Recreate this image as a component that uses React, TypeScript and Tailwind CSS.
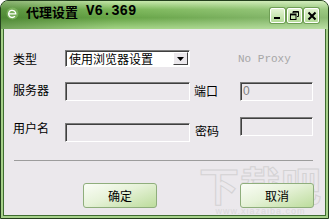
import React from "react";

const sunken =
  "border border-t-[#7b7b7b] border-l-[#7b7b7b] border-b-white border-r-white shadow-[inset_1px_1px_0_#3f3f3f]";

function TitleButton({ children }: { children: React.ReactNode }) {
  return (
    <div className="flex h-[15px] w-[15px] items-center justify-center rounded-[2px] border border-white bg-[linear-gradient(to_bottom,#e4f4d4,#b4dc98)] shadow-[0_0_0_1px_#6f9e55]">
      {children}
    </div>
  );
}

function Field({ w, value }: { w: string; value?: string }) {
  return (
    <div className={`${w} h-[19px] ${sunken} bg-[#ebe8ec] pl-[2px] text-[12px] leading-[16px] text-[#808080] font-['Liberation_Sans',sans-serif]`}>
      {value}
    </div>
  );
}

function Button({ label }: { label: string }) {
  return (
    <button
      type="button"
      className="flex h-[25px] w-[74px] items-center justify-center rounded-[3px] border border-[#8fae7c] bg-[linear-gradient(160deg,#fafdf6_0%,#e6f2d8_45%,#bcdc9c_100%)] text-[12px] text-black"
    >
      {label}
    </button>
  );
}

export default function App() {
  return (
    <div className="h-[219px] w-[329px] overflow-hidden bg-white font-['Noto_Sans_CJK_SC',sans-serif]">
      <div className="relative flex h-full w-full flex-col rounded-t-[8px] border border-[#233f1d] bg-[#a6d08a]">
        {/* title bar */}
        <div className="flex h-[28px] shrink-0 items-start rounded-t-[7px] bg-[linear-gradient(to_right,rgba(30,80,15,0.35),rgba(30,80,15,0)_35%,rgba(255,255,255,0.25)),linear-gradient(to_bottom,#c6e8aa_0%,#7cb85a_30%,#66a446_60%,#a4d486_100%)] pl-[5px] pr-[9px]">
          <svg width="13" height="13" viewBox="0 0 13 13" className="mt-[6px]">
            <circle cx="6.5" cy="6.5" r="6" fill="#8cc26c" opacity="0.6" />
            <path d="M3 6.8 H9.8 A3.6 3.6 0 1 0 8.6 9.6" stroke="white" strokeWidth="1.3" fill="none" strokeLinecap="round" />
          </svg>
          <span className="ml-[7px] mt-[3px] text-[13px] font-bold leading-[15px] text-black">代理设置</span>
          <span className="ml-[8px] mt-[3px] font-['Liberation_Mono',monospace] text-[14px] font-bold leading-[15px] text-black">V6.369</span>
          <div className="ml-auto mt-[7px] flex gap-[2px]">
            <TitleButton>
              <svg width="9" height="9" viewBox="0 0 9 9">
                <rect x="1" y="6" width="6" height="2" fill="black" />
              </svg>
            </TitleButton>
            <TitleButton>
              <svg width="9" height="9" viewBox="0 0 9 9">
                <path d="M3 0.5 H8.5 V5.5 H7 M3 0.5 V2" stroke="black" strokeWidth="1" fill="none" />
                <rect x="0.5" y="3" width="5.5" height="5.5" stroke="black" strokeWidth="1" fill="none" />
                <rect x="0.5" y="3" width="5.5" height="1.4" fill="black" />
                <rect x="3" y="0.5" width="5.5" height="1.2" fill="black" />
              </svg>
            </TitleButton>
            <TitleButton>
              <svg width="10" height="10" viewBox="0 0 10 10">
                <path d="M1.5 1.5 L8.5 8.5 M8.5 1.5 L1.5 8.5" stroke="black" strokeWidth="2" />
              </svg>
            </TitleButton>
          </div>
        </div>

        {/* body */}
        <div className="mx-[2px] mb-[2px] flex flex-1 flex-col border-x border-b border-[#3e6c30] bg-[#ebe8ec] pl-[9px] text-[12px] leading-[14px] text-black">
          {/* row 1 */}
          <div className="mt-[21px] flex h-[17px] items-center">
            <span className="w-[52px]">类型</span>
            <div className={`flex h-[17px] w-[125px] items-center ${sunken} bg-white`}>
              <span className="flex-1 pl-[3px] leading-[14px]">使用浏览器设置</span>
              <div className="mr-[1px] flex h-[13px] w-[15px] items-center justify-center border border-t-white border-l-white border-b-[#404040] border-r-[#404040] bg-[#ebe8ec]">
                <svg width="7" height="4" viewBox="0 0 7 4">
                  <path d="M0 0 H7 L3.5 4 Z" fill="black" />
                </svg>
              </div>
            </div>
            <span className="ml-[48px] font-['Liberation_Mono',monospace] text-[11px] text-[#a6a6a6]">No Proxy</span>
          </div>

          {/* row 2 */}
          <div className="mt-[15px] flex h-[19px] items-center">
            <span className="w-[52px] -mt-[4px]">服务器</span>
            <Field w="w-[125px]" />
            <span className="w-[50px] -mt-[2px] pl-[4px]">端口</span>
            <Field w="w-[73px]" value="0" />
          </div>

          {/* row 3 */}
          <div className="mt-[16px] flex h-[26px] items-start">
            <span className="mt-[4px] w-[52px]">用户名</span>
            <div className="mt-[6px]">
              <Field w="w-[125px]" />
            </div>
            <span className="mt-[7px] w-[50px] pl-[5px]">密码</span>
            <Field w="w-[73px]" />
          </div>

          {/* separator */}
          <div className="ml-[1px] mt-[17px] h-[1px] w-[299px] bg-[#9c9c9c]" />

          {/* buttons */}
          <div className="relative z-10 mt-[22px] flex">
            <div className="ml-[70px]">
              <Button label="确定" />
            </div>
            <div className="ml-[83px]">
              <Button label="取消" />
            </div>
          </div>
        </div>

        {/* watermark */}
        <div className="pointer-events-none absolute bottom-[2px] right-[6px] flex flex-col items-center opacity-60">
          <span className="text-[40px] font-bold leading-[44px] tracking-[1px] text-transparent [-webkit-text-stroke:1px_#c4c4c4]">下载吧</span>
          <span className="font-['Liberation_Sans',sans-serif] text-[9px] leading-[10px] tracking-[1px] text-[#cfcfcf]">www.xiazaiba.com</span>
        </div>
      </div>
    </div>
  );
}
